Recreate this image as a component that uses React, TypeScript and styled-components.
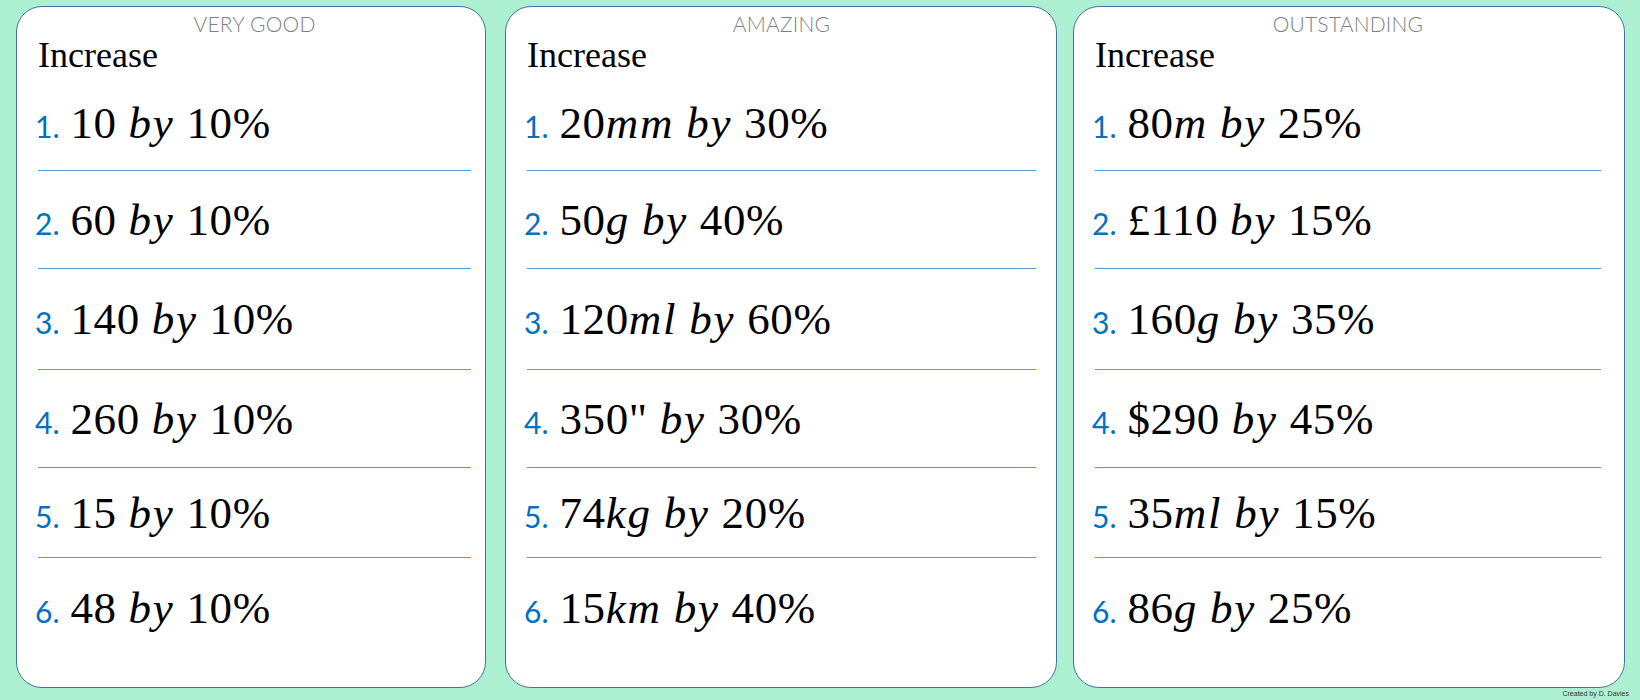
import React from 'react';
import styled, { createGlobalStyle } from 'styled-components';

const GlobalStyle = createGlobalStyle`
  html, body {
    margin: 0;
    padding: 0;
    background: #adf0d1;
  }
  body {
    width: 1640px;
    height: 700px;
    overflow: hidden;
    font-family: 'Liberation Serif', serif;
  }
`;

const Page = styled.div`
  width: 1640px;
  height: 700px;
  box-sizing: border-box;
  padding: 6px 15px 0 16px;
  background: #adf0d1;
`;

const Board = styled.div`
  display: flex;
  gap: 16px;
`;

const Card = styled.section<{ $width: number; $trail?: number; $ruleRight: number }>`
  width: ${({ $width }) => $width}px;
  margin-right: ${({ $trail = 0 }) => $trail}px;
  height: 682px;
  box-sizing: border-box;
  border: 1.3px solid #41719c;
  border-radius: 26px;
  background: #fff;
  padding: 6px ${({ $ruleRight }) => $ruleRight}px 0 21px;
  display: flex;
  flex-direction: column;
`;

const Level = styled.div`
  text-align: center;
  font-family: Lato, 'Open Sans', sans-serif;
  font-weight: 300;
  font-size: 21px;
  line-height: 21px;
  color: #7f7f7f;
  letter-spacing: 0.2px;
`;

const Prompt = styled.div`
  font-family: 'Liberation Serif', serif;
  font-size: 36px;
  line-height: 40px;
  color: #000;
  margin-top: 1px;
`;

const Row = styled.div<{ $h: number; $last?: boolean }>`
  height: ${({ $h }) => $h}px;
  box-sizing: border-box;
  display: flex;
  align-items: center;
  border-bottom: ${({ $last }) => ($last ? 'none' : '1px solid #5b9bd5')};
`;

const Item = styled.div`
  white-space: nowrap;
  margin-left: -3px;
`;

const Num = styled.span`
  font-family: Lato, 'Open Sans', sans-serif;
  font-size: 30px;
  color: #0070c0;
  margin-right: 11px;
`;

const Expr = styled.span`
  font-family: 'Liberation Serif', serif;
  font-size: 45px;
  letter-spacing: 0.6px;
  color: #000;
`;

const Var = styled.i`
  font-style: italic;
  letter-spacing: 1.8px;
`;

const Footer = styled.div`
  display: flex;
  justify-content: flex-end;
  margin-right: -4px;
  margin-top: 2px;
`;

const Credit = styled.span`
  font-family: 'Liberation Sans', Arial, sans-serif;
  font-size: 7px;
  line-height: 8px;
  color: #333;
`;

const rowHeights = [96, 98, 101, 98, 90, 100];

const levels = [
  {
    title: 'VERY GOOD',
    width: 470,
    trail: 3,
    ruleRight: 14,
    items: ['10 by 10%', '60 by 10%', '140 by 10%', '260 by 10%', '15 by 10%', '48 by 10%'],
  },
  {
    title: 'AMAZING',
    width: 552,
    ruleRight: 20,
    items: ['20mm by 30%', '50g by 40%', '120ml by 60%', '350" by 30%', '74kg by 20%', '15km by 40%'],
  },
  {
    title: 'OUTSTANDING',
    width: 552,
    ruleRight: 23,
    items: ['80m by 25%', '£110 by 15%', '160g by 35%', '$290 by 45%', '35ml by 15%', '86g by 25%'],
  },
];

// letters are set as maths variables (italic), everything else upright
const renderExpr = (text: string) =>
  text.split(/([a-z]+)/).map((part, i) =>
    /^[a-z]+$/.test(part) ? <Var key={i}>{part}</Var> : <React.Fragment key={i}>{part}</React.Fragment>
  );

const App = () => (
  <Page>
    <GlobalStyle />
    <Board>
      {levels.map((level) => (
        <Card key={level.title} $width={level.width} $trail={level.trail} $ruleRight={level.ruleRight}>
          <Level>{level.title}</Level>
          <Prompt>Increase</Prompt>
          {level.items.map((item, i) => (
            <Row key={item} $h={rowHeights[i]} $last={i === level.items.length - 1}>
              <Item>
                <Num>{i + 1}.</Num>
                <Expr>{renderExpr(item)}</Expr>
              </Item>
            </Row>
          ))}
        </Card>
      ))}
    </Board>
    <Footer>
      <Credit>Created by D. Davies</Credit>
    </Footer>
  </Page>
);

export default App;
